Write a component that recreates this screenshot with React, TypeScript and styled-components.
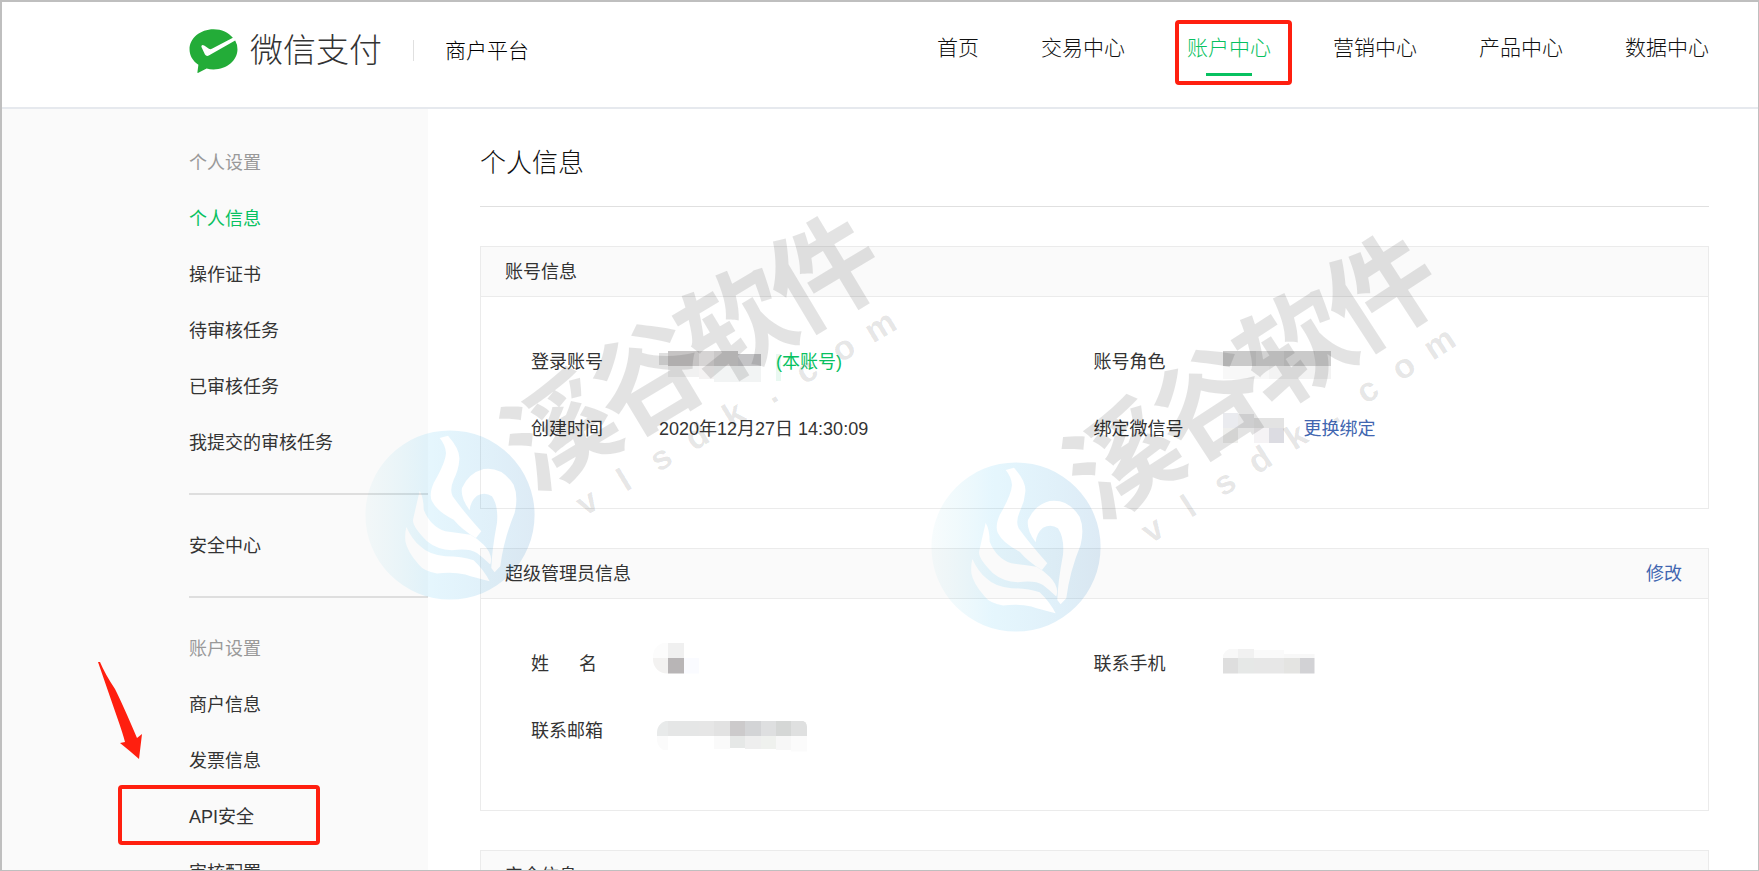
import React from "react";
import styled, { createGlobalStyle } from "styled-components";

const GlobalStyle = createGlobalStyle`
  *, *::before, *::after { box-sizing: border-box; }
  body {
    margin: 0;
    background: #fff;
    color: #333;
    font: 400 18px/24px "Liberation Sans", "Noto Sans CJK SC", sans-serif;
  }
  h1, h2, p, ul, dl, dd { margin: 0; padding: 0; font-weight: inherit; }
  ul { list-style: none; }
  a { color: inherit; text-decoration: none; }
`;

const green = "#07c160";
const red = "#ff1f0f";

const Page = styled.div`
  position: relative;
  display: flex;
  flex-direction: column;
  height: 100vh;
  overflow: hidden;
  border: solid #bfbfbf;
  border-width: 2px 1px 1px 2px;
`;

const Header = styled.header`
  display: flex;
  flex: none;
  justify-content: space-between;
  height: 107px;
  padding: 0 49px 0 187px;
  border-bottom: 2px solid #e6e9ee;
  font-weight: 300;
`;

const Brand = styled.a`
  display: flex;
  align-items: center;
  height: 97px;
`;

const BrandName = styled.span`
  margin-left: 12px;
  font-size: 33px;
  line-height: 40px;
  color: #333;
`;

const Platform = styled.span`
  display: flex;
  align-items: center;
  font-size: 21px;
  color: #000;

  &::before {
    content: "";
    height: 21px;
    margin: 0 31px;
    border-left: 1px solid #e0e0e0;
  }
`;

const TopNav = styled.nav`
  display: flex;
  gap: 62px;
`;

const TopLink = styled.a<{ $active?: boolean }>`
  position: relative;
  height: 92px;
  font-size: 21px;
  line-height: 92px;
  white-space: nowrap;
  color: ${(p) => (p.$active ? green : "#111")};

  &::after {
    content: "";
    display: ${(p) => (p.$active ? "block" : "none")};
    position: absolute;
    bottom: 18px;
    left: 19px;
    right: 19px;
    height: 3px;
    background: ${green};
  }
`;

const Highlight = styled.span<{ $inset: string }>`
  position: absolute;
  inset: ${(p) => p.$inset};
  border: 4px solid ${red};
  border-radius: 4px;
  pointer-events: none;
`;

const Body = styled.div`
  display: flex;
  flex: 1;
  min-height: 0;
`;

const Sidebar = styled.aside`
  flex: none;
  width: 426px;
  padding: 26px 0 0 187px;
  background: #fafafa;
`;

const Group = styled.section<{ $rule?: number }>`
  & + & {
    margin-top: 22px;
    padding-top: 23px;
    border-top: ${(p) => p.$rule}px solid #dedede;
  }
`;

const GroupTitle = styled.h2`
  font-size: 18px;
  line-height: 56px;
  color: #999;
`;

const SideItem = styled.li`
  position: relative;
`;

const SideLink = styled.a<{ $active?: boolean }>`
  display: block;
  line-height: 56px;
  color: ${(p) => (p.$active ? green : "#333")};
`;

const Arrow = styled.svg`
  position: absolute;
  left: -91px;
  top: -127px;
  pointer-events: none;
`;

const Main = styled.main`
  flex: 1;
  min-width: 0;
  padding: 0 49px 0 52px;
`;

const Title = styled.h1`
  height: 98px;
  margin-bottom: 39px;
  padding-top: 36px;
  border-bottom: 1px solid #e0e0e0;
  font-size: 26px;
  font-weight: 300;
  line-height: 36px;
  color: #111;
`;

const Panel = styled.section`
  margin-bottom: 39px;
  border: 1px solid #ebebeb;
`;

const PanelHead = styled.header`
  display: flex;
  justify-content: space-between;
  align-items: center;
  height: 50px;
  padding: 0 26px 0 24px;
  border-bottom: 1px solid #ebebeb;
  background: #fafafa;
`;

const PanelTitle = styled.h2`
  font-size: 18px;
`;

const Fields = styled.dl`
  display: grid;
  grid-template-columns: 1fr 1fr;
  grid-auto-rows: 67px;
  padding: 31px 52px 46px 50px;
`;

const FieldRow = styled.div`
  display: flex;
  align-items: center;
`;

const FieldName = styled.dt`
  flex: none;
  width: 128px;
`;

const FieldValue = styled.dd`
  display: flex;
  align-items: center;
`;

const Note = styled.span`
  color: ${green};
`;

const TextLink = styled.a`
  color: #4166b0;
`;

const MosaicArt = styled.svg<{ $clip?: string }>`
  display: block;
  flex: none;
  overflow: visible;
  clip-path: ${(p) => p.$clip || "none"};
`;

const WatermarkLayer = styled.svg`
  position: absolute;
  inset: 0;
  width: 100%;
  height: 100%;
  pointer-events: none;
`;

const WatermarkName = styled.text`
  font: 700 110px "Noto Sans CJK SC", sans-serif;
`;

const WatermarkSite = styled.text`
  font: 700 34px "Liberation Sans", sans-serif;
  text-anchor: middle;
`;

type Cell = [x: number, y: number, w: number, h: number, fill: string];

const Mosaic = ({ width, cells, clip }: { width: number; cells: Cell[]; clip?: string }) => (
  <MosaicArt width={width} height={40} $clip={clip} aria-hidden="true" shapeRendering="crispEdges">
    {cells.map(([x, y, w, h, fill], i) => (
      <rect key={i} x={x} y={y} width={w} height={h} fill={fill} />
    ))}
  </MosaicArt>
);

const accountCells: Cell[] = [
  [0, 11, 9, 12, "#e0e0e0"],
  [9, 9, 31, 15, "#c6c4c4"],
  [40, 9, 15, 15, "#d6d4d4"],
  [55, 9, 24, 15, "#cac8c8"],
  [79, 12, 23, 12, "#c4c4c6"],
  [9, 24, 31, 11, "#f1f1f1"],
  [40, 24, 15, 13, "#f5f3f3"],
  [55, 24, 47, 16, "#f2f4f4"],
  [117, 12, 5, 27, "#e9f8f1"],
];

const roleCells: Cell[] = [
  [1, 9, 33, 15, "#cacaca"],
  [34, 9, 28, 15, "#d2d2d2"],
  [62, 9, 31, 15, "#cacaca"],
  [93, 9, 16, 15, "#cfcfcf"],
  [1, 24, 46, 13, "#f8f8f8"],
  [47, 24, 62, 13, "#f3f3f3"],
];

const wechatCells: Cell[] = [
  [1, 4, 15, 15, "#eaebef"],
  [16, 5, 16, 14, "#e8e8e9"],
  [32, 9, 30, 10, "#e3e3e3"],
  [1, 19, 15, 15, "#efefed"],
  [32, 19, 15, 15, "#f5f3f5"],
  [47, 19, 15, 15, "#dcdce2"],
];

const nameCells: Cell[] = [
  [-6, -1, 15, 15, "#fcfcfc"],
  [9, -1, 16, 15, "#f0f0f0"],
  [-6, 14, 15, 16, "#f3f2f1"],
  [9, 14, 16, 16, "#b8b5b6"],
  [25, 14, 15, 16, "#fafbff"],
];

const mailCells: Cell[] = [
  [-2, 10, 11, 15, "#e8eaea"],
  [9, 10, 31, 15, "#e5e6e6"],
  [40, 10, 15, 15, "#e6e6e6"],
  [55, 10, 16, 15, "#e2e2e2"],
  [71, 10, 15, 15, "#cccacb"],
  [86, 10, 16, 15, "#d3d4d6"],
  [102, 10, 15, 15, "#dedfe0"],
  [117, 10, 15, 15, "#d5d7d6"],
  [132, 10, 16, 15, "#dfe0e0"],
  [-2, 25, 11, 14, "#fbfbfb"],
  [55, 25, 16, 13, "#fafafa"],
  [71, 25, 15, 12, "#e6e8e7"],
  [86, 25, 16, 13, "#eeeeee"],
  [102, 25, 15, 13, "#eff1ee"],
  [117, 25, 15, 14, "#f7f7f7"],
  [132, 25, 16, 16, "#fbfbfb"],
];

const phoneCells: Cell[] = [
  [1, 5, 15, 9, "#f8f8f8"],
  [16, 5, 16, 9, "#f1f1f1"],
  [32, 6, 30, 8, "#fafafa"],
  [62, 10, 31, 4, "#f8f8f8"],
  [1, 14, 15, 16, "#dedede"],
  [16, 14, 16, 16, "#e6e8e7"],
  [32, 14, 30, 16, "#e7e7e7"],
  [62, 14, 16, 16, "#e4e4e2"],
  [78, 14, 15, 16, "#d2d2d5"],
];

const PayLogo = () => (
  <svg width="49" height="44" viewBox="14 26 148 134" aria-hidden="true">
    <path
      fill="#23ac38"
      d="M88 27C48 27 15 54 15 88C15 107 25 124 42 135L39 158Q39 161 42 159L67 146Q77 149 88 149C129 149 161 122 161 88Q161 73 154 61L75 106Q67 111 62 104L51 80Q51 71 61 77L74 86Q78 89 83 86L147 53C134 37 113 27 88 27Z"
    />
  </svg>
);

const flame =
  "M20 276A254 254 0 1 0 528 276A254 254 0 1 0 20 276Z" +
  "M243 45L268 38Q305 80 302 110Q300 140 285 170Q272 200 282 220Q310 260 368 325L352 345Q310 320 285 290Q235 265 220 235Q210 215 225 180Q260 120 262 90Q260 65 243 45Z" +
  "M333 262Q305 225 310 195Q330 150 375 138Q430 130 465 185Q480 220 468 270Q435 350 425 430L408 448L398 435Q400 380 415 300Q420 250 400 220Q380 205 355 218Q335 235 333 262Z" +
  "M183 203Q195 225 195 260Q215 310 260 325Q300 330 335 335Q355 345 375 365Q405 395 395 425Q375 405 355 390Q330 375 280 382Q235 380 205 355Q160 310 163 290Q172 250 183 203Z" +
  "M143 312Q160 350 185 370Q210 395 260 400Q310 400 345 412Q375 440 393 475Q350 465 320 455Q280 445 235 452Q195 445 180 425Q145 385 140 355Q138 330 143 312Z";

const nameLetters = [83, 186, 288, 391].join(" ");
const siteLetters = [124, 167, 210, 252, 295, 338, 380, 423, 466].join(" ");

const Watermark = ({ x, y, angle }: { x: number; y: number; angle: number }) => (
  <g transform={`translate(${x} ${y})`}>
    <g transform="scale(0.333) translate(-274 -276)">
      <path d={flame} fill="url(#flameTint)" fillRule="evenodd" />
    </g>
    <g transform={`rotate(${-angle})`} fill="#000" fillOpacity="0.11">
      <WatermarkName x={nameLetters} y={25}>溪谷软件</WatermarkName>
      <WatermarkSite x={siteLetters} y={71}>vlsdk.com</WatermarkSite>
    </g>
  </g>
);

const topLinks = ["首页", "交易中心", "账户中心", "营销中心", "产品中心", "数据中心"];

const groups = [
  { title: "个人设置", items: ["个人信息", "操作证书", "待审核任务", "已审核任务", "我提交的审核任务"], rule: 1 },
  { items: ["安全中心"], rule: 1 },
  { title: "账户设置", items: ["商户信息", "发票信息", "API安全", "审核配置"], rule: 2 },
];

const Field = ({ name, children }: { name: string; children: React.ReactNode }) => (
  <FieldRow>
    <FieldName>{name}</FieldName>
    <FieldValue>{children}</FieldValue>
  </FieldRow>
);

export default function App() {
  return (
    <>
      <GlobalStyle />
      <Page>
        <Header>
          <Brand href="#">
            <PayLogo />
            <BrandName>微信支付</BrandName>
            <Platform>商户平台</Platform>
          </Brand>
          <TopNav>
            {topLinks.map((label) => (
              <TopLink key={label} href="#" $active={label === "账户中心"}>
                {label}
                {label === "账户中心" && <Highlight $inset="18px -21px 9px -12px" />}
              </TopLink>
            ))}
          </TopNav>
        </Header>
        <Body>
          <Sidebar>
            {groups.map((group, i) => (
              <Group key={i} $rule={group.rule}>
                {group.title && <GroupTitle>{group.title}</GroupTitle>}
                <ul>
                  {group.items.map((item) => (
                    <SideItem key={item}>
                      <SideLink href="#" $active={item === "个人信息"}>{item}</SideLink>
                      {item === "API安全" && (
                        <>
                          <Highlight $inset="-4px 108px 0 -71px" />
                          <Arrow width="44" height="97" viewBox="98 663 44 97" aria-hidden="true">
                            <path
                              fill={red}
                              d="M98 663L100 663Q105 675 115 690Q123 706 137 739L142 735L139 760Q130 752 120 744L125 743Q123 735 117 718L108 692Z"
                            />
                          </Arrow>
                        </>
                      )}
                    </SideItem>
                  ))}
                </ul>
              </Group>
            ))}
          </Sidebar>
          <Main>
            <Title>个人信息</Title>
            <Panel>
              <PanelHead>
                <PanelTitle>账号信息</PanelTitle>
              </PanelHead>
              <Fields>
                <Field name="登录账号">
                  <Mosaic width={117} cells={accountCells} />
                  <Note>(本账号)</Note>
                </Field>
                <Field name="账号角色">
                  <Mosaic width={110} cells={roleCells} />
                </Field>
                <Field name="创建时间">2020年12月27日 14:30:09</Field>
                <Field name="绑定微信号">
                  <Mosaic width={82} cells={wechatCells} />
                  <TextLink href="#">更换绑定</TextLink>
                </Field>
              </Fields>
            </Panel>
            <Panel>
              <PanelHead>
                <PanelTitle>超级管理员信息</PanelTitle>
                <TextLink href="#">修改</TextLink>
              </PanelHead>
              <Fields>
                <Field name={"姓\u00a0\u00a0\u00a0\u00a0\u00a0\u00a0名"}>
                  <Mosaic width={40} cells={nameCells} clip="inset(-1px 0 10px -6px round 14px 0 0 14px)" />
                </Field>
                <Field name="联系手机">
                  <Mosaic width={93} cells={phoneCells} clip="inset(5px 0 10px 1px round 10px 0 0 0)" />
                </Field>
                <Field name="联系邮箱">
                  <Mosaic width={148} cells={mailCells} clip="inset(10px 0 -1px -2px round 12px 6px 0 12px)" />
                </Field>
              </Fields>
            </Panel>
            <Panel>
              <PanelHead>
                <PanelTitle>安全信息</PanelTitle>
              </PanelHead>
            </Panel>
          </Main>
        </Body>
        <WatermarkLayer aria-hidden="true">
          <defs>
            <linearGradient id="flameTint">
              <stop offset="0" stopColor="#3cb4c8" stopOpacity="0.04" />
              <stop offset="0.35" stopColor="#00aaf0" stopOpacity="0.1" />
              <stop offset="1" stopColor="#1e78be" stopOpacity="0.15" />
            </linearGradient>
          </defs>
          <Watermark x={448} y={513} angle={31} />
          <Watermark x={1014} y={545} angle={33} />
        </WatermarkLayer>
      </Page>
    </>
  );
}
